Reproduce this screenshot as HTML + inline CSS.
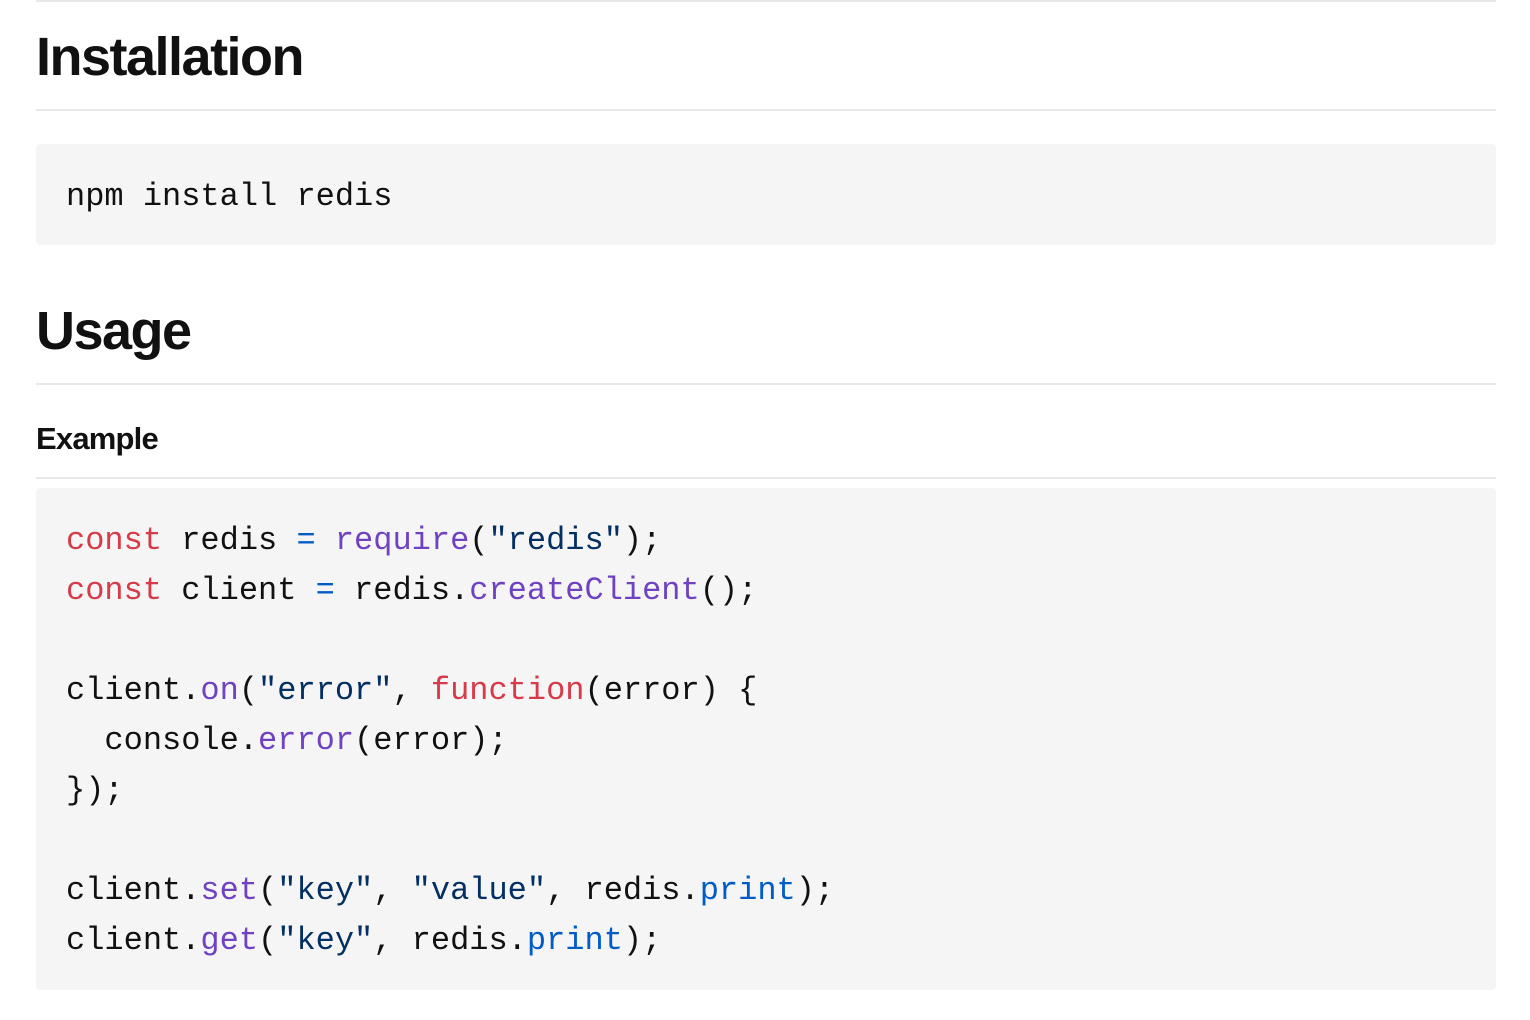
<!DOCTYPE html>
<html><head><style>
body{margin:0;background:#fff;width:1530px;height:1020px;overflow:hidden;font-family:"Liberation Sans",sans-serif;color:#111}
.hr{position:absolute;left:36px;width:1460px;height:2px;background:#e8e8e8}
h1{position:absolute;left:36px;margin:0;font-size:54px;font-weight:bold;letter-spacing:-1.5px;line-height:1}
h3{position:absolute;left:36px;margin:0;font-size:31px;font-weight:bold;letter-spacing:-0.8px;line-height:1}
.pre{position:absolute;left:36px;width:1460px;background:#f5f5f5;border-radius:4px;font-family:"Liberation Mono",monospace;font-size:32px;white-space:pre;color:#111}
.pre div{position:absolute;left:30px;line-height:50px}
.k{color:#d73a49}.f{color:#6f42c1}.s{color:#032f62}.n{color:#005cc5}
</style></head><body>
<div class="hr" style="top:0"></div>
<h1 style="top:30px">Installation</h1>
<div class="hr" style="top:109px"></div>
<div class="pre" style="top:144px;height:101px"><div style="top:28px">npm install redis</div></div>
<h1 style="top:304px">Usage</h1>
<div class="hr" style="top:383px"></div>
<h3 style="top:423px">Example</h3>
<div class="hr" style="top:477px"></div>
<div class="pre" style="top:488px;height:502px"><div style="top:28px"><span class="k">const</span> redis <span class="n">=</span> <span class="f">require</span>(<span class="s">"redis"</span>);
<span class="k">const</span> client <span class="n">=</span> redis.<span class="f">createClient</span>();

client.<span class="f">on</span>(<span class="s">"error"</span>, <span class="k">function</span>(error) {
  console.<span class="f">error</span>(error);
});

client.<span class="f">set</span>(<span class="s">"key"</span>, <span class="s">"value"</span>, redis.<span class="n">print</span>);
client.<span class="f">get</span>(<span class="s">"key"</span>, redis.<span class="n">print</span>);</div></div>
</body></html>
